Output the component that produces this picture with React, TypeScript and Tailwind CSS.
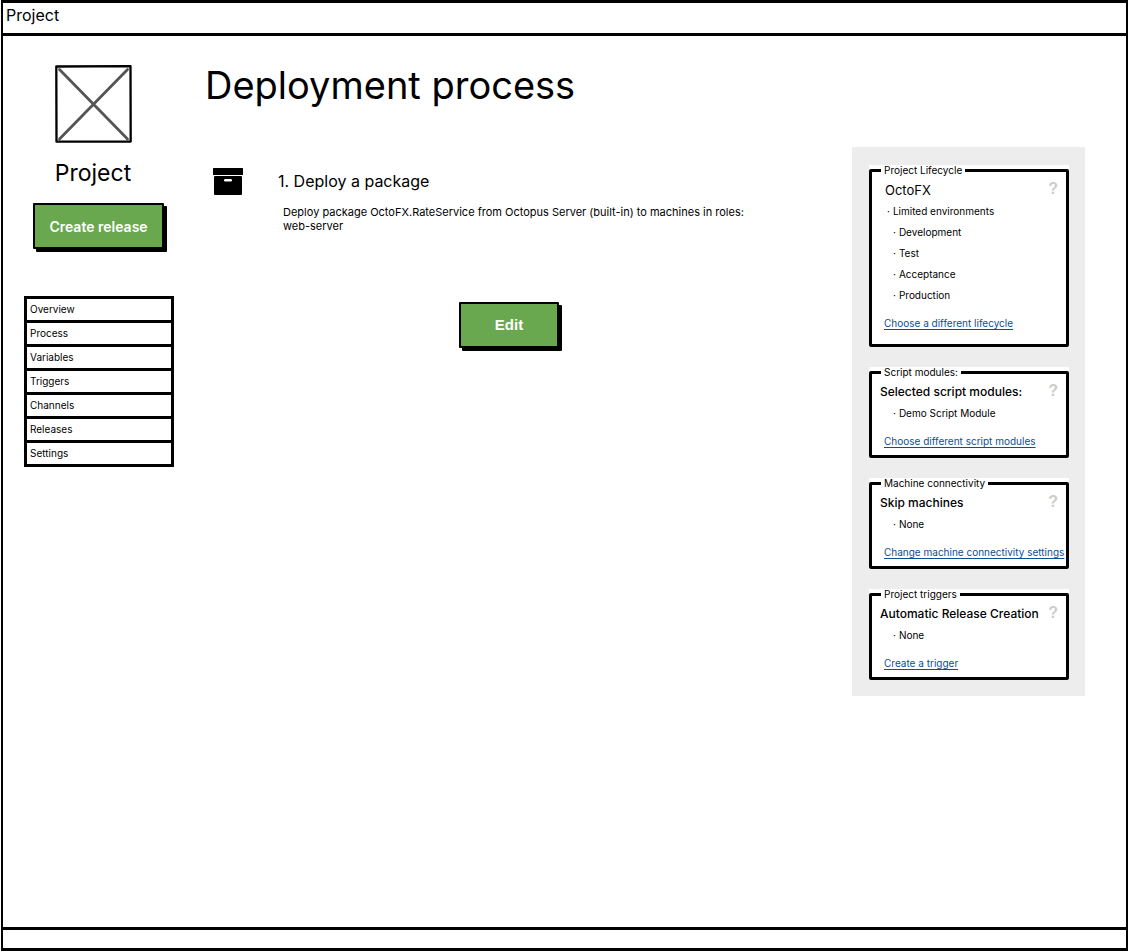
import type { ReactNode } from "react";

const navItems = ["Overview", "Process", "Variables", "Triggers", "Channels", "Releases", "Settings"];

function ImagePlaceholder() {
  return (
    <svg className="h-[78px] w-[77px]" viewBox="0 0 77 78" fill="none" role="img" aria-label="Project logo">
      <path d="M4.5 4.5 72.500 74M72.500 4.500 4.500 74" stroke="#555" strokeWidth="2.800" strokeLinecap="round" />
      <path d="M1.300 1.500 75.500 1.200 75.700 76.500 1.500 76.700Z" stroke="#000" strokeWidth="2.300" strokeLinejoin="round" />
    </svg>
  );
}

function PackageIcon() {
  return (
    <svg className="mt-[3px] h-[30px] w-[30px] shrink-0" viewBox="0 0 30 30" aria-hidden="true">
      <rect x="0" y="1" width="30" height="7" rx="0.500" fill="#000" />
      <rect x="1" y="9" width="28" height="19" rx="1" fill="#000" />
      <rect x="11" y="12" width="8" height="2.600" rx="1.300" fill="#fff" />
    </svg>
  );
}

function SketchButton({ children, className }: { children: ReactNode; className: string }) {
  return (
    <button
      type="button"
      className={`h-[46px] rounded-[1px] border-2 border-black bg-[#6aa84f] text-white shadow-[3px_3px_0_0_#000] ${className}`}
    >
      {children}
    </button>
  );
}

type CardProps = {
  legend: string;
  title: string;
  link: string;
  items: string[];
  lead?: string;
};

function Card({ legend, title, link, items, lead }: CardProps) {
  return (
    <section className="bg-white">
      <fieldset
        className={`relative min-w-0 rounded-[2px] border-[3px] border-black pl-2 ${lead ? "pb-[11px]" : "pb-1"}`}
      >
        <legend className="ml-px px-[3px] text-[10px] leading-[11px]">{legend}</legend>
        <button
          type="button"
          aria-label={`Help: ${legend}`}
          className="absolute top-[3px] right-2 font-['Liberation_Sans',sans-serif] text-[16px] leading-[20px] font-black text-[#cccccc]"
        >
          ?
        </button>
        <h2
          className={`mt-[3px] leading-[22px] whitespace-nowrap ${lead ? "pl-[5px] text-[13px]" : "text-[12px] font-medium"}`}
        >
          {title}
        </h2>
        <ul className="text-[10px] leading-[21px]">
          {lead && (
            <li className="flex gap-[3px] pl-[7px]">
              <span aria-hidden="true">·</span>
              {lead}
            </li>
          )}
          {items.map((item) => (
            <li key={item} className="flex gap-[3px] pl-[13px]">
              <span aria-hidden="true">·</span>
              {item}
            </li>
          ))}
        </ul>
        <a
          href="#"
          className="mt-[7px] ml-1 block text-[10px] leading-[20px] whitespace-nowrap text-[#0b4f96] underline underline-offset-2"
        >
          {link}
        </a>
      </fieldset>
    </section>
  );
}

export default function App() {
  return (
    <div className="flex min-h-screen flex-col bg-white px-px pb-px font-['Inter',sans-serif] text-black">
      <div className="flex flex-1 flex-col border-2 border-t-[3px] border-b-[3px] border-black">
        <header className="border-b-[3px] border-black px-[3px] pb-[6px] text-[16px] leading-[24px]">Project</header>

        <div className="flex flex-1 items-start">
          <aside className="flex w-[171px] shrink-0 flex-col pt-[29px] pl-[21px]">
            <div className="flex w-[138px] flex-col items-center">
              <ImagePlaceholder />
              <p className="mt-[14px] text-[23px] leading-[32px]">Project</p>
            </div>
            <SketchButton className="mt-[14px] ml-[9px] w-[131px] text-[14px] font-semibold">Create release</SketchButton>
            <nav aria-label="Project" className="mt-[47px] border-t-[3px] border-black">
              <ul>
                {navItems.map((item) => (
                  <li key={item} className="border-x-[3px] border-b-[3px] border-black">
                    <a href="#" className="block px-[3px] text-[10px] leading-[21px]">
                      {item}
                    </a>
                  </li>
                ))}
              </ul>
            </nav>
          </aside>

          <main className="min-w-0 flex-1 pt-6 pl-[31px]">
            <h1 className="text-[38px] leading-[50px]">Deployment process</h1>
            <div className="mt-[54px] flex max-w-[608px] flex-col">
              <div className="flex items-start gap-[35px] pl-2">
                <PackageIcon />
                <div>
                  <h2 className="mt-[5px] text-[16px] leading-[24px]">1. Deploy a package</h2>
                  <p className="mt-3 pr-8 pl-[5px] text-[11px] leading-[14px]">
                    Deploy package OctoFX.RateService from Octopus Server (built-in) to machines in roles:{" "}
                    <span className="whitespace-nowrap">web-server</span>
                  </p>
                </div>
              </div>
              <SketchButton className="mt-[69px] w-[100px] self-center font-['Liberation_Sans',sans-serif] text-[15px] font-bold">
                Edit
              </SketchButton>
            </div>
          </main>

          <aside className="mt-[111px] mr-[41px] flex w-[233px] shrink-0 flex-col gap-5 bg-[#ededed] pt-[18px] pr-4 pb-4 pl-[17px]">
            <Card
              legend="Project Lifecycle"
              title="OctoFX"
              lead="Limited environments"
              items={["Development", "Test", "Acceptance", "Production"]}
              link="Choose a different lifecycle"
            />
            <Card
              legend="Script modules:"
              title="Selected script modules:"
              items={["Demo Script Module"]}
              link="Choose different script modules"
            />
            <Card
              legend="Machine connectivity"
              title="Skip machines"
              items={["None"]}
              link="Change machine connectivity settings"
            />
            <Card
              legend="Project triggers"
              title="Automatic Release Creation"
              items={["None"]}
              link="Create a trigger"
            />
          </aside>
        </div>

        <footer className="h-[21px] border-t-[3px] border-black" />
      </div>
    </div>
  );
}
